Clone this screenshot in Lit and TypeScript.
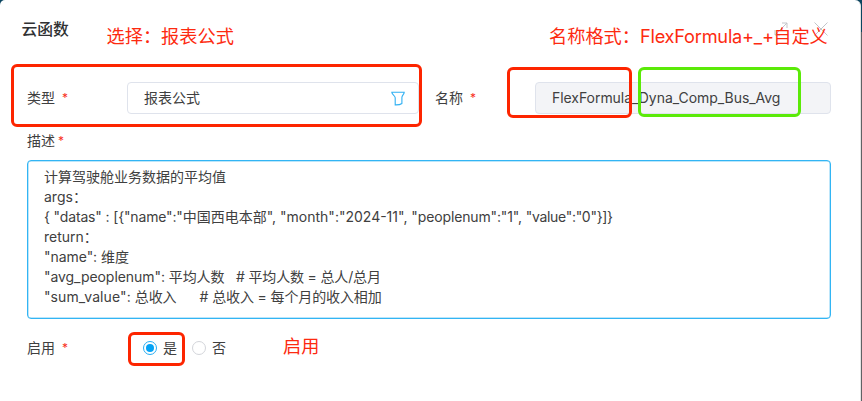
import { LitElement, html, css } from "lit";
import { customElement } from "lit/decorators.js";

type Run = [text: string, spacing: number];

@customElement("app-root")
export class AppRoot extends LitElement {
  static styles = css`
    :host {
      display: block;
      position: relative;
      width: 862px;
      height: 401px;
      overflow: hidden;
      background: linear-gradient(#0b4560 0 32px, #606164 32px);
      font: 14px/20px Inter, "Noto Sans CJK SC", sans-serif;
      color: #404040;
    }
    * { box-sizing: border-box; }
    .dialog {
      width: 861px;
      height: 401px;
      background: #fff;
      border-radius: 5px 6px 0 0;
      border-right: 1px solid #e4e4e4;
      padding: 17px 29px 0 27px;
    }
    header {
      display: flex;
      align-items: center;
      justify-content: space-between;
      height: 24px;
      margin: 0 3px 0 -5.5px;
    }
    h1 { margin: 1px 0 0; font-size: 15.8px; font-weight: 500; line-height: 24px; color: #303133; }
    .tools { display: flex; gap: 26px; }
    .tools svg { fill: none; stroke: #c3c5c9; stroke-width: 1; display: block; }
    .row { display: flex; align-items: center; white-space: pre; }
    .first { height: 32px; margin-top: 41px; }
    .label { display: flex; width: 100px; }
    .name { width: 100px; margin-left: 16px; }
    .req { color: #f8301c; margin-left: 7px; font-size: 12px; }
    .input {
      display: flex;
      align-items: center;
      justify-content: space-between;
      width: 292px;
      height: 32px;
      border: 1px solid #dfe3ec;
      border-radius: 4px;
      padding: 0 13px 0 16px;
    }
    .disabled { width: 296px; background: #f3f4f7; letter-spacing: -0.05px; }
    .input svg { fill: none; stroke: #2fb0f2; stroke-width: 1.1; }
    .desc { margin-top: 17px; height: 20px; }
    .desc .req { margin-left: 3px; }
    .area {
      height: 159px;
      margin: 9px 0 0;
      width: 804px;
      border: 1px solid #32b5f4;
      box-shadow: inset 0 0 0 0.5px #7bcdf5;
      border-radius: 4px;
      padding: 6px 16px;
      white-space: pre;
    }
    .line { height: 20px; }
    .radios { margin-top: 19px; height: 20px; }
    .opt { display: flex; align-items: center; }
    .opt + .opt { margin-left: 15px; }
    .radio {
      display: grid;
      place-items: center;
      width: 14px;
      height: 14px;
      border: 1px solid #d3d5da;
      border-radius: 50%;
      margin-right: 6px;
    }
    .on { border-color: #27adf3; }
    .on::after { content: ""; width: 8px; height: 8px; border-radius: 50%; background: #05a3f5; }
    .yes { margin-left: 16px; }
    .mark { position: absolute; border: 3px solid #fd2500; border-radius: 6px; }
    .m1 { left: 11px; top: 64px; width: 411px; height: 63px; }
    .m2 { left: 507px; top: 67px; width: 125px; height: 51px; }
    .m3 { left: 638px; top: 67px; width: 163px; height: 50px; border-color: #5bea08; }
    .m4 { left: 128px; top: 332px; width: 57px; height: 34px; }
    .note { position: absolute; font-size: 18.2px; line-height: 26px; color: #fd2a10; white-space: pre; }
    .n1 { left: 106.5px; top: 23px; }
    .n2 { left: 549px; top: 23px; }
    .n2 .code { letter-spacing: -0.23px; margin-right: -0.5px; }
    .n3 { left: 283px; top: 333px; }
  `;

  private lines: Run[][] = [
    [["计算驾驶舱业务数据的平均值", 0]],
    [["args：", 0]],
    [
      ['{ "datas" : [{"name":"', -0.15],
      ['中国西电本部", "month":"2024-11", ', 0],
      ['"peoplenum":"1", ', -0.14],
      ['"value":"0"}]}', -0.3],
    ],
    [["return：", 0]],
    [['"name": ', -0.05], ["维度", 0]],
    [['"avg_peoplenum": ', -0.06], ["平均人数   # ", -0.1], ["平均人数 = 总人/总月", -0.16]],
    [['"sum_value": ', 0.1], ["总收入      # ", -0.1], ["总收入 = 每个月的收入相加", -0.12]],
  ];

  render() {
    return html`
      <div class="dialog">
        <header>
          <h1>云函数</h1>
          <div class="tools">
            <svg width="14" height="14" viewBox="0 0 14 14"><path d="M1 13 13 1M8 1h5v5M1 8v5h5" /></svg>
            <svg width="14" height="14" viewBox="0 0 14 14"><path d="M.5.5l13 13M13.5.5l-13 13" /></svg>
          </div>
        </header>
        <div class="row first">
          <div class="label">类型<span class="req">*</span></div>
          <div class="input">
            <span>报表公式</span>
            <svg width="14" height="15" viewBox="0 0 14 15">
              <path d="M.8 1.2h12.4c0 2.3-2.300 3-2.300 5.200v6.100c-1.800 1.300-4.300 1.500-6.700 1.400V6.800C4.200 4.500.8 3.600.8 1.200Z" />
            </svg>
          </div>
          <div class="label name">名称<span class="req">*</span></div>
          <div class="input disabled"><span>FlexFormula_Dyna_Comp_Bus_Avg</span></div>
        </div>
        <div class="row desc"><div class="label">描述<span class="req">*</span></div></div>
        <div class="area">${this.lines.map(
          (runs) => html`<div class="line">${runs.map(
            ([text, spacing]) => html`<span style="letter-spacing:${spacing}px">${text}</span>`
          )}</div>`
        )}</div>
        <div class="row radios">
          <div class="label">启用<span class="req">*</span></div>
          <div class="opt yes"><i class="radio on"></i>是</div>
          <div class="opt"><i class="radio"></i>否</div>
        </div>
      </div>
      <div class="mark m1"></div>
      <div class="mark m2"></div>
      <div class="mark m3"></div>
      <div class="mark m4"></div>
      <div class="note n1">选择：报表公式</div>
      <div class="note n2">名称格式：<span class="code">FlexFormula+_+</span>自定义</div>
      <div class="note n3">启用</div>
    `;
  }
}
